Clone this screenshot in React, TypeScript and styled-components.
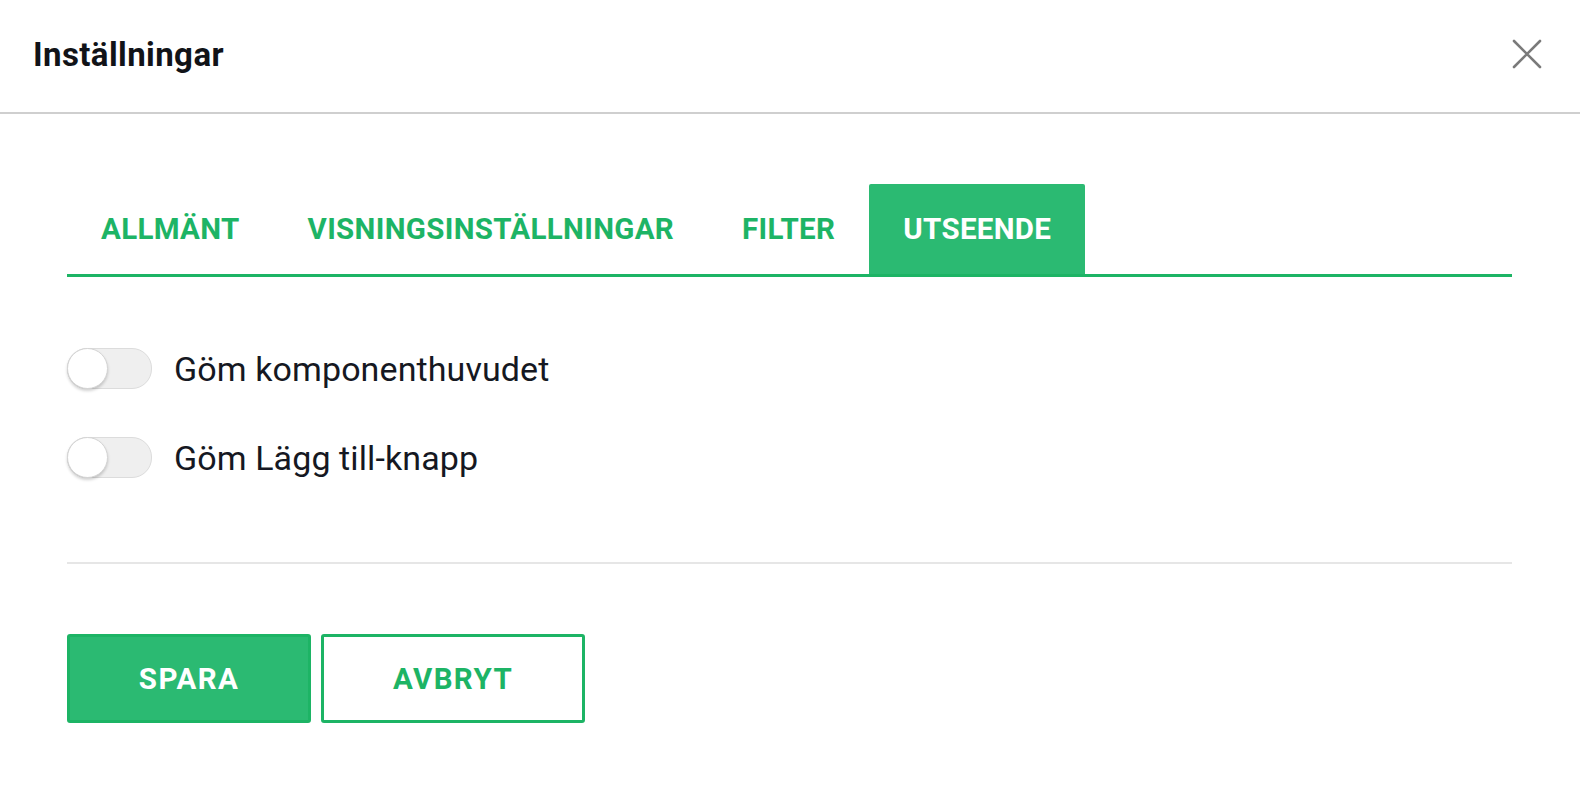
import React, { useState } from "react";
import styled, { createGlobalStyle } from "styled-components";

const GREEN = "#2bba72";
const GREEN_DARK = "#1db465";

const GlobalStyle = createGlobalStyle`
  html, body {
    margin: 0;
    padding: 0;
    background: #ffffff;
    font-family: Roboto, "Liberation Sans", sans-serif;
  }
`;

const Modal = styled.div`
  width: 1580px;
  height: 789px;
  background: #fff;
  display: flex;
  flex-direction: column;
`;

const Header = styled.header`
  height: 112px;
  display: flex;
  align-items: center;
  justify-content: space-between;
  padding: 0 36px 4px 33px;
  box-sizing: border-box;
  height: 114px;
  border-bottom: 2px solid #cfcfcf;
`;

const Title = styled.h1`
  margin: 0;
  font-size: 33px;
  font-weight: 700;
  color: #111318;
  letter-spacing: 0.4px;
`;

const CloseBtn = styled.button`
  width: 34px;
  height: 34px;
  padding: 0;
  border: 0;
  background: none;
  display: flex;
  align-items: center;
  justify-content: center;
  cursor: pointer;
`;

const Body = styled.div`
  padding: 70px 68px 0 67px;
  display: flex;
  flex-direction: column;
`;

const TabBar = styled.div`
  display: flex;
  border-bottom: 3px solid ${GREEN_DARK};
`;

const Tab = styled.button<{ $active?: boolean }>`
  height: 90px;
  padding: 0 34px;
  border: 0;
  border-radius: 2px 2px 0 0;
  background: ${(p) => (p.$active ? GREEN : "transparent")};
  color: ${(p) => (p.$active ? "#ffffff" : GREEN_DARK)};
  font-family: Roboto, "Liberation Sans", sans-serif;
  font-size: 29.5px;
  font-weight: 700;
  letter-spacing: 0.32px;
  text-transform: uppercase;
  cursor: pointer;
`;

const Options = styled.div`
  display: flex;
  flex-direction: column;
  gap: 48px;
  padding: 71px 0 84px;
  border-bottom: 2px solid #e6e6e6;
`;

const OptionRow = styled.label`
  display: flex;
  align-items: center;
  gap: 22px;
  height: 41px;
  cursor: pointer;
`;

const Track = styled.span<{ $on: boolean }>`
  position: relative;
  flex: none;
  width: 83px;
  height: 39px;
  border-radius: 20px;
  border: 1px solid #dcdcdc;
  background: ${(p) => (p.$on ? GREEN : "#efefef")};
`;

const Thumb = styled.span<{ $on: boolean }>`
  position: absolute;
  top: -1px;
  left: ${(p) => (p.$on ? "42px" : "-1px")};
  width: 41px;
  height: 41px;
  border-radius: 50%;
  background: #fff;
  box-sizing: border-box;
  border: 1px solid #d4d4d4;
  box-shadow: 0 2px 3px rgba(0, 0, 0, 0.18);
`;

const OptionText = styled.span`
  font-size: 34px;
  color: #151822;
  letter-spacing: 0.1px;
`;

const Footer = styled.div`
  display: flex;
  gap: 10px;
  padding-top: 70px;
`;

const Button = styled.button<{ $primary?: boolean }>`
  height: 89px;
  width: ${(p) => (p.$primary ? "244px" : "264px")};
  border-radius: 3px;
  border: 3px solid ${GREEN_DARK};
  background: ${(p) => (p.$primary ? GREEN : "#fff")};
  color: ${(p) => (p.$primary ? "#fff" : GREEN_DARK)};
  font-family: Roboto, "Liberation Sans", sans-serif;
  font-size: 29.5px;
  font-weight: 700;
  letter-spacing: 1.4px;
  cursor: pointer;
`;

const CloseIcon = () => (
  <svg width="30" height="30" viewBox="0 0 30 30">
    <path d="M2 2 L28 28 M28 2 L2 28" stroke="#7a7a7a" strokeWidth="2.6" strokeLinecap="round" />
  </svg>
);

const tabs = ["Allmänt", "Visningsinställningar", "Filter", "Utseende"];

export default function App() {
  const [active, setActive] = useState(3);
  const [opts, setOpts] = useState([false, false]);
  const labels = ["Göm komponenthuvudet", "Göm Lägg till-knapp"];

  return (
    <>
      <GlobalStyle />
      <Modal>
        <Header>
          <Title>Inställningar</Title>
          <CloseBtn aria-label="Stäng">
            <CloseIcon />
          </CloseBtn>
        </Header>
        <Body>
          <TabBar>
            {tabs.map((t, i) => (
              <Tab key={t} $active={i === active} onClick={() => setActive(i)}>
                {t}
              </Tab>
            ))}
          </TabBar>
          <Options>
            {labels.map((l, i) => (
              <OptionRow
                key={l}
                onClick={() => setOpts(opts.map((v, j) => (j === i ? !v : v)))}
              >
                <Track $on={opts[i]}>
                  <Thumb $on={opts[i]} />
                </Track>
                <OptionText>{l}</OptionText>
              </OptionRow>
            ))}
          </Options>
          <Footer>
            <Button $primary>SPARA</Button>
            <Button>AVBRYT</Button>
          </Footer>
        </Body>
      </Modal>
    </>
  );
}
